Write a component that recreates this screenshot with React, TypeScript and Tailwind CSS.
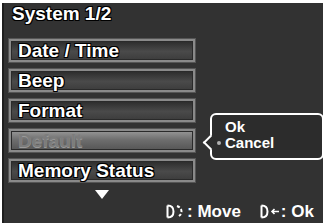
import React from "react";

const items = [
    { label: "Date / Time", disabled: false },
    { label: "Beep", disabled: false },
    { label: "Format", disabled: false },
    { label: "Default", disabled: true },
    { label: "Memory Status", disabled: false },
];

const outline =
    "[text-shadow:-1px_-1px_0_#000,1px_-1px_0_#000,-1px_1px_0_#000,1px_1px_0_#000,0_1px_0_#000,0_-1px_0_#000]";

function MenuBar({ label, disabled }: { label: string; disabled: boolean }) {
    return (
        <div className="h-[25px] w-[188px] border border-[#555] bg-[#8a8a8a] p-[2px]">
            <div
                className={`h-full flex items-center pl-[6px] border border-[#2a2a2a] ${
                    disabled
                        ? "bg-[linear-gradient(#929292,#6e6e6e_45%,#585858)]"
                        : "bg-[linear-gradient(#2e2e2e,#4a4a4a_55%,#3e3e3e)]"
                }`}
            >
                <span
                    className={`text-[19px] leading-none font-bold ${
                        disabled
                            ? "text-[#7c7c7c] [text-shadow:0_1px_0_#9a9a9a]"
                            : `text-white ${outline}`
                    }`}
                >
                    {label}
                </span>
            </div>
        </div>
    );
}

function DialRotate() {
    return (
        <svg width="18" height="15" viewBox="0 0 18 15" fill="none" stroke="white" strokeWidth="2">
            <path d="M1.5 1.5v12M1.5 1.5c5 0 6 2.5 6 6s-1 6-6 6" />
            <path d="M11 2c3 1.2 4.5 3 4.5 5.5S14 11.8 11 13" strokeDasharray="3 2" />
        </svg>
    );
}

function DialPush() {
    return (
        <svg width="20" height="15" viewBox="0 0 20 15" fill="none" stroke="white" strokeWidth="2">
            <path d="M1.5 1.5v12M1.5 1.5c5 0 6 2.5 6 6s-1 6-6 6" />
            <path d="M19 7.5h-7M14.5 5l-2.5 2.5 2.5 2.5" strokeWidth="1.6" />
        </svg>
    );
}

export default function App() {
    return (
        <div
            className="w-[323px] h-[223px] bg-white pt-[3px] pl-[2px] overflow-hidden"
            style={{ fontFamily: '"Liberation Sans", Arial, sans-serif' }}
        >
            <div className="relative h-full bg-[#323232] border-l-2 border-[#1e1e1e] flex flex-col pl-[4px]">
                <div className={`pl-[4px] pt-[1px] text-[19px] leading-[20px] font-bold text-white ${outline}`}>
                    System 1/2
                </div>

                <div className="mt-[14px] flex flex-col gap-[5px]">
                    {items.map((it) => (
                        <MenuBar key={it.label} label={it.label} disabled={it.disabled} />
                    ))}
                </div>

                <div className="w-[188px] flex justify-center mt-[7px]">
                    <div className="w-0 h-0 border-l-[7px] border-r-[7px] border-t-[9px] border-l-transparent border-r-transparent border-t-white" />
                </div>

                <div className="mt-[4px] flex items-center text-white font-bold text-[17px] leading-none pl-[158px]">
                    <DialRotate />
                    <span className="ml-[3px]">: Move</span>
                    <span className="ml-[19px] flex items-center">
                        <DialPush />
                        <span className="ml-[1px]">: Ok</span>
                    </span>
                </div>

                {/* confirm popup */}
                <div className="absolute left-[206px] top-[110px] w-[114px] h-[47px] rounded-[6px] border-2 border-white bg-[#2c2c2c] pl-[13px] pt-[4px]">
                    <div className="absolute left-[-7px] top-[22px] w-[11px] h-[11px] rotate-45 bg-[#2c2c2c] border-l-2 border-b-2 border-white" />
                    <div className="text-[15px] leading-[16px] font-bold text-white">Ok</div>
                    <div className="relative text-[15px] leading-[16px] font-bold text-white">
                        <span className="absolute left-[-8px] top-[6px] w-[4px] h-[4px] rounded-full bg-[#b0b0b0]" />
                        Cancel
                    </div>
                </div>
            </div>
        </div>
    );
}
